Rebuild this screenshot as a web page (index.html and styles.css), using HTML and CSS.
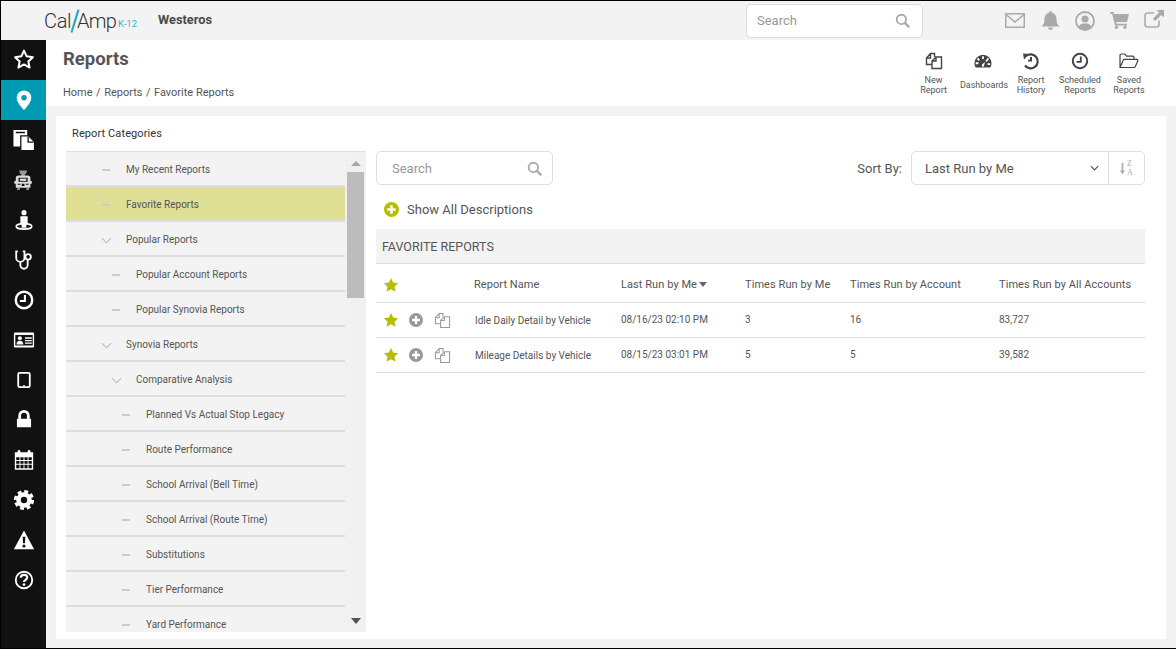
FILE: index.html
```html
<!DOCTYPE html>
<html lang="en">
<head>
<meta charset="utf-8">
<title>Reports</title>
<link rel="stylesheet" href="styles.css">
</head>
<body>
<svg class="defs" width="0" height="0" aria-hidden="true">
  <symbol id="i-search" viewBox="0 0 16 16"><circle cx="6.8" cy="6.8" r="5" fill="none" stroke="currentColor" stroke-width="2"/><path d="M10.5 10.5l4 4" stroke="currentColor" stroke-width="2.4" stroke-linecap="round"/></symbol>
  <symbol id="i-star" viewBox="0 0 24 24"><path d="M12 1.5l3.2 6.9 7.5.9-5.500 5.200 1.500 7.500-6.700-3.800-6.700 3.800 1.500-7.500L1.300 9.300l7.500-.9z" fill="currentColor"/></symbol>
  <symbol id="i-plus" viewBox="0 0 16 16"><path fill-rule="evenodd" fill="currentColor" d="M8 0a8 8 0 1 1 0 16A8 8 0 0 1 8 0zM6.700 3.500v3.200H3.500v2.600h3.200v3.200h2.600V9.300h3.200V6.700H9.300V3.500z"/></symbol>
  <symbol id="i-copy" viewBox="0 0 18 18"><path fill="none" stroke="currentColor" d="M6.500 12.500H1.500V6l4-4.500h4V5M7 16.500V9l4-4h5.500v11.500zM11 5v4H7M5.500 1.500V6H1.500"/></symbol>
</svg>
<div class="app">
  <header class="topbar">
    <div class="logo"><span class="logo-cal">Cal</span><span class="logo-slash"></span><span class="logo-amp">Amp</span><span class="logo-k">K-12</span></div>
    <div class="tenant">Westeros</div>
    <div class="top-search"><span>Search</span><svg class="s14"><use href="#i-search"/></svg></div>
    <nav class="top-icons">
      <svg viewBox="0 0 20 15" class="ti-mail"><rect x=".75" y=".75" width="18.500" height="13.500" fill="none" stroke="currentColor" stroke-width="1.500"/><path d="M1 1.500l9 7.500 9-7.500" fill="none" stroke="currentColor" stroke-width="1.500"/></svg>
      <svg viewBox="0 0 18 20" class="ti-bell"><path fill="currentColor" d="M9 0a1.600 1.600 0 0 1 1.500 1.800C13.500 2.500 15 5 15 8c0 4 1 5.500 3 7.500H0C2 13.500 3 12 3 8c0-3 1.500-5.500 4.500-6.200A1.600 1.600 0 0 1 9 0zM6.500 16.500h5a2.500 2.500 0 0 1-5 0z"/></svg>
      <svg viewBox="0 0 20 20" class="ti-user"><circle cx="10" cy="10" r="9" fill="none" stroke="currentColor" stroke-width="1.800"/><circle cx="10" cy="8" r="3.600" fill="currentColor"/><path fill="currentColor" d="M3.800 15.500C5 13 7 12.500 10 12.500s5 .5 6.200 3C14.500 17.500 12.500 18.500 10 18.500s-4.500-1-6.200-3z"/></svg>
      <svg viewBox="0 0 19 17" class="ti-cart"><path fill="currentColor" d="M0 0h3.500l.6 2H19l-2 8H6.200l.4 1.700H17v1.800H5L2.200 1.800H0z"/><circle cx="6.500" cy="15.300" r="1.700" fill="currentColor"/><circle cx="15" cy="15.300" r="1.700" fill="currentColor"/></svg>
      <svg viewBox="0 0 20 18" class="ti-ext"><path fill="none" stroke="currentColor" stroke-width="1.600" d="M15 10.500v4a2.500 2.500 0 0 1-2.500 2.500h-9A2.500 2.500 0 0 1 1 14.500v-9A2.500 2.500 0 0 1 3.500 3H10"/><path fill="currentColor" d="M12.500 0H20v7.500l-2.600-2.600-6.200 6.200-2.300-2.300 6.200-6.200z"/></svg>
    </nav>
  </header>
  <div class="body-row">
    <aside class="side">
      <a class="side-item"><svg viewBox="0 0 24 24"><path d="M12 1.800l2.900 6.200 6.800.9-5 4.700 1.400 6.700-6.100-3.400-6.100 3.400 1.400-6.700-5-4.700 6.800-.9z" fill="none" stroke="#fff" stroke-width="2.200" stroke-linejoin="round"/></svg></a>
      <a class="side-item active"><svg viewBox="0 0 24 24"><path fill="#fff" fill-rule="evenodd" d="M12 1.500a8 8 0 0 0-8 8c0 5.500 8 13.500 8 13.500s8-8 8-13.500a8 8 0 0 0-8-8zM12 6.500a3 3 0 1 1 0 6 3 3 0 0 1 0-6z"/></svg></a>
      <a class="side-item"><svg viewBox="0 0 24 24"><path fill="#fff" d="M.5 1h15v6.500H9v11.500H.5z"/><path fill="#fff" stroke="#111" stroke-width="1.400" d="M8.500 7.500h8.500l6.500 6.500v9.500H8.500z"/><path fill="#111" d="M3 3h10v1.500H3zM15.800 8.500h1.400v5h5.300v1.400h-6.700z"/></svg></a>
      <a class="side-item"><svg viewBox="0 0 24 24"><path fill="#999" d="M6.500 1.500h9l-1.500 4h-1v2h-4v-2h-1z"/><path fill="#ddd" d="M6 7h10a3 3 0 0 1 3 3v3h1.500v3H19v3.500a1 1 0 0 1-1 1H4a1 1 0 0 1-1-1V16H1.500v-3H3v-3a3 3 0 0 1 3-3z"/><path fill="#111" d="M6 9.500h10v4.500H6zM5 16h3v1.300H5zM14 16h3v1.300h-3zM9.500 16h3v2.500h-3z"/><path fill="#ddd" d="M7.500 10.500h7V13h-7z"/><path fill="#bbb" d="M4.500 21h3v1.500h-3zM14.500 21h3v1.500h-3z"/></svg></a>
      <a class="side-item"><svg viewBox="0 0 24 24"><circle cx="12" cy="4" r="2.800" fill="#fff"/><path fill="#fff" d="M8 7.800h8v7.500h-1.500V19h-5v-3.700H8z"/><ellipse cx="12" cy="19" rx="8.500" ry="3" fill="none" stroke="#fff" stroke-width="1.800"/><path fill="#fff" d="M9.500 15h5v5.500h-5z"/></svg></a>
      <a class="side-item"><svg viewBox="0 0 24 24"><path fill="none" stroke="#fff" stroke-width="2" stroke-linecap="round" d="M4.500 2.500H3.500v7a4.500 4.500 0 0 0 9 0v-7h-1M8 14v3.500a4 4 0 0 0 8 0V12"/><circle cx="16.500" cy="8.500" r="3" fill="none" stroke="#fff" stroke-width="2"/></svg></a>
      <a class="side-item"><svg viewBox="0 0 24 24"><circle cx="12" cy="12" r="9" fill="none" stroke="#fff" stroke-width="2.600"/><path fill="none" stroke="#fff" stroke-width="2.200" d="M13 6.500V13H7.500"/></svg></a>
      <a class="side-item"><svg viewBox="0 0 24 24"><rect x="1" y="3.800" width="22" height="16.400" rx="1.200" fill="#fff"/><rect x="2.500" y="6.500" width="19" height="11.500" fill="#111"/><circle cx="7.500" cy="10" r="2.200" fill="#fff"/><path fill="#fff" d="M3.800 16.800c0-3 1.500-4 3.700-4s3.700 1 3.700 4zM13 9h7.500v1.700H13zM13 12h7.500v1.400H13zM13 14.700h7.500v1.400H13z"/></svg></a>
      <a class="side-item"><svg viewBox="0 0 24 24"><rect x="5.700" y="4.200" width="12.600" height="15.600" rx="1.500" fill="none" stroke="#fff" stroke-width="2"/><path stroke="#fff" stroke-width="1.200" d="M11 18.400h2"/></svg></a>
      <a class="side-item"><svg viewBox="0 0 24 24"><path fill="#fff" fill-rule="evenodd" d="M5.800 10.500V7.200a6.200 6.200 0 0 1 12.400 0v3.300h1.500V20H4.300v-9.500zM8.800 10.500h6.400V7.200a3.200 3.200 0 0 0-6.400 0z"/></svg></a>
      <a class="side-item"><svg viewBox="0 0 24 24"><path fill="#fff" d="M2 3.500H5V2.500a1.500 1.500 0 0 1 3 0v1h8v-1a1.500 1.500 0 0 1 3 0v1h3v19H2z"/><path fill="#111" d="M3.500 9h3.600v3H3.500zM8.100 9h3.400v3H8.100zM12.500 9h3.400v3h-3.400zM16.900 9h3.600v3h-3.600zM3.500 13h3.600v3.200H3.500zM8.100 13h3.400v3.200H8.100zM12.500 13h3.400v3.200h-3.400zM16.900 13h3.600v3.200h-3.600zM3.500 17.200h3.600V21H3.500zM8.100 17.200h3.400V21H8.100zM12.500 17.200h3.400V21h-3.400zM16.900 17.200h3.600V21h-3.600z"/></svg></a>
      <a class="side-item"><svg viewBox="0 0 24 24"><circle cx="12" cy="12" r="6" fill="none" stroke="#fff" stroke-width="5"/><circle cx="12" cy="12" r="9.300" fill="none" stroke="#fff" stroke-width="3.400" stroke-dasharray="4.200 3.100"/></svg></a>
      <a class="side-item"><svg viewBox="0 0 24 24"><path fill="#fff" fill-rule="evenodd" d="M12 1.500l11 20.500H1zM10.500 8.500l.5 7h2l.5-7zM12 16.800a1.700 1.700 0 1 0 0 3.400 1.700 1.700 0 0 0 0-3.400z"/></svg></a>
      <a class="side-item"><svg viewBox="0 0 24 24"><circle cx="12" cy="12" r="9" fill="none" stroke="#fff" stroke-width="2"/><path fill="none" stroke="#fff" stroke-width="2.400" d="M8.500 9.500c0-2 1.500-3 3.500-3s3.500 1 3.500 2.800c0 2.600-3.500 2.400-3.500 5"/><circle cx="12" cy="17" r="1.500" fill="#fff"/></svg></a>
    </aside>
    <main class="main">
      <section class="page-head">
        <div class="page-title">
          <h1>Reports</h1>
          <div class="crumbs"><span>Home</span><i>/</i><span>Reports</span><i>/</i><span>Favorite Reports</span></div>
        </div>
        <div class="actions">
          <a class="action w-new"><svg class="a-ic" viewBox="0 0 18 18"><use href="#i-copy"/></svg><span>New<br>Report</span></a>
          <a class="action w-dash"><svg class="a-ic dash-ic" viewBox="0 0 20 18"><path fill="#444" fill-rule="evenodd" d="M10 2a9.500 9.500 0 0 1 9.500 9.500c0 2-.6 3.500-1.500 4.800H2C1.100 15 .5 13.500.5 11.500A9.500 9.500 0 0 1 10 2zM9 3.700v3h2v-3zM4.500 5.500L3.200 7l2 2 1.400-1.500zM15.500 5.500l-2.800 3.300 1.300 1.200 2.800-3.200zM1.900 10.500v2h3v-2zM15 11.500v2h3v-2zM9 12.800a1.800 1.800 0 0 0 1.800 2.700l1.500-5.800z"/></svg><span class="one">Dashboards</span></a>
          <a class="action w-hist"><svg class="a-ic" viewBox="0 0 18 18"><path fill="none" stroke="#444" stroke-width="2.200" d="M4.200 4A7 7 0 1 1 3 13.500"/><path fill="#444" d="M1 1.500l6 .5-5 5.500zM8 5h2v4.500H6V7.800h2z"/></svg><span>Report<br>History</span></a>
          <a class="action w-sched"><svg class="a-ic" viewBox="0 0 18 18"><circle cx="9" cy="9" r="7.200" fill="none" stroke="#444" stroke-width="2"/><path fill="none" stroke="#444" stroke-width="1.800" d="M9.800 4.500v5.300H5.500"/></svg><span>Scheduled<br>Reports</span></a>
          <a class="action w-saved"><svg class="a-ic wide" viewBox="0 0 20 16"><path fill="none" stroke="#444" stroke-width="1.200" stroke-linejoin="round" d="M1 14.500V2.300A1.300 1.300 0 0 1 2.300 1h3.200l2 2.200h6.200a1.300 1.300 0 0 1 1.300 1.300V6.500M1 14.500l3.300-7.500a1 1 0 0 1 1-.6H18a1 1 0 0 1 .9 1.400l-2.700 6c-.2.500-.6.700-1 .7z"/></svg><span>Saved<br>Reports</span></a>
        </div>
      </section>
      <section class="card">
        <div class="cats">
          <h2>Report Categories</h2>
          <div class="tree-wrap">
            <ul class="tree">
              <li class="lv0"><b class="dash"></b>My Recent Reports</li>
              <li class="lv0 sel"><b class="dash"></b>Favorite Reports</li>
              <li class="lv0"><b class="chev"></b>Popular Reports</li>
              <li class="lv1"><b class="dash"></b>Popular Account Reports</li>
              <li class="lv1"><b class="dash"></b>Popular Synovia Reports</li>
              <li class="lv0"><b class="chev"></b>Synovia Reports</li>
              <li class="lv1"><b class="chev"></b>Comparative Analysis</li>
              <li class="lv2"><b class="dash"></b>Planned Vs Actual Stop Legacy</li>
              <li class="lv2"><b class="dash"></b>Route Performance</li>
              <li class="lv2"><b class="dash"></b>School Arrival (Bell Time)</li>
              <li class="lv2"><b class="dash"></b>School Arrival (Route Time)</li>
              <li class="lv2"><b class="dash"></b>Substitutions</li>
              <li class="lv2"><b class="dash"></b>Tier Performance</li>
              <li class="lv2"><b class="dash"></b>Yard Performance</li>
            </ul>
            <div class="sbar"><span class="arr up"></span><span class="thumb"></span><span class="arr down"></span></div>
          </div>
        </div>
        <div class="content">
          <div class="tools">
            <div class="list-search"><span>Search</span><svg class="s15"><use href="#i-search"/></svg></div>
            <div class="sort">
              <label>Sort By:</label>
              <div class="select"><span>Last Run by Me</span><svg class="sel-chev" viewBox="0 0 10 6"><path d="M1 1l4 4 4-4" fill="none" stroke="#555" stroke-width="1.300"/></svg></div>
              <div class="sort-btn"><svg viewBox="0 0 6 14" class="sort-arrow"><path fill="#aaa" d="M2 0h2v9.500h2L3 14 0 9.500h2z"/></svg><span class="za">Z<br>A</span></div>
            </div>
          </div>
          <div class="show-all"><svg class="s15 lime"><use href="#i-plus"/></svg><span>Show All Descriptions</span></div>
          <div class="band">FAVORITE REPORTS</div>
          <div class="grid head">
            <span><svg class="st lime"><use href="#i-star"/></svg></span>
            <span>Report Name</span>
            <span class="sorted">Last Run by Me<b class="tri"></b></span>
            <span>Times Run by Me</span>
            <span>Times Run by Account</span>
            <span>Times Run by All Accounts</span>
          </div>
          <div class="grid row">
            <span class="ops"><svg class="st lime"><use href="#i-star"/></svg><svg class="op-plus"><use href="#i-plus"/></svg><svg class="op-copy"><use href="#i-copy"/></svg></span>
            <span class="name">Idle Daily Detail by Vehicle</span>
            <span class="val">08/16/23 02:10 PM</span>
            <span class="val">3</span>
            <span class="val">16</span>
            <span class="val">83,727</span>
          </div>
          <div class="grid row">
            <span class="ops"><svg class="st lime"><use href="#i-star"/></svg><svg class="op-plus"><use href="#i-plus"/></svg><svg class="op-copy"><use href="#i-copy"/></svg></span>
            <span class="name">Mileage Details by Vehicle</span>
            <span class="val">08/15/23 03:01 PM</span>
            <span class="val">5</span>
            <span class="val">5</span>
            <span class="val">39,582</span>
          </div>
        </div>
      </section>
    </main>
  </div>
</div>
</body>
</html>
```
FILE: styles.css
```css
* { box-sizing: border-box; }
html, body { margin: 0; height: 100%; overflow: hidden; }
body { font-family: Roboto, "Liberation Sans", sans-serif; color: #555; background: #000; }
.defs { position: absolute; }
a { display: block; }
ul { list-style: none; margin: 0; padding: 0; }
h1, h2 { margin: 0; }

.app { width: 1176px; height: 649px; padding: 1px 0 1px 1px; display: flex; flex-direction: column; }

.topbar { height: 39px; flex: none; background: #f3f3f3; display: flex; align-items: center; }
.logo { width: 157px; padding-left: 43px; display: flex; align-items: center; height: 39px; font-weight: 300; color: #333; font-size: 20px; letter-spacing: -.3px; }
.logo-cal { width: 26px; }
.logo-slash { width: 1.500px; height: 24px; background: #1ba6c6; transform: rotate(17deg); margin: 0 2px 0 3.500px; flex: none; }
.logo-amp { width: 39px; letter-spacing: -.8px; }
.logo-k { font-size: 9.500px; color: #36b4d3; letter-spacing: 0; margin: 6px 0 0 2px; font-weight: 400; }
.tenant { font-size: 12.800px; font-weight: 700; color: #4a4a4a; width: 588px; margin-top: -2px; }
.top-search { width: 177px; height: 34px; background: #fff; border: 1px solid #ddd; border-radius: 5px; display: flex; align-items: center; justify-content: space-between; padding: 0 12px 0 10px; font-size: 13px; color: #999; }
.s14 { width: 15px; height: 15px; color: #aaa; }
.s15 { width: 15px; height: 15px; color: #aaa; }
.top-icons { color: #aaa; display: flex; align-items: center; margin-left: 82px; gap: 15px; }
.ti-mail { width: 20px; height: 15px; }
.ti-bell { width: 19px; height: 20px; margin-left: 1px; }
.ti-user { width: 20px; height: 20px; }
.ti-cart { width: 19px; height: 17px; }
.ti-ext { width: 20px; height: 18px; margin-top: -4px; }

.body-row { flex: 1; display: flex; min-height: 0; }
.side { width: 45px; flex: none; background: #111; overflow: hidden; }
.side-item { height: 40px; display: flex; align-items: center; justify-content: center; }
.side-item svg { width: 22px; height: 22px; }
.side-item.active { background: #009ab3; }

.main { flex: 1; background: #f3f3f3; padding-bottom: 9px; display: flex; flex-direction: column; }
.page-head { height: 66px; flex: none; background: #fff; display: flex; justify-content: space-between; padding: 0 31px 0 17px; }
.page-title h1 { font-size: 18.500px; line-height: 24px; font-weight: 700; color: #555; margin-top: 7px; }
.crumbs { font-size: 11px; line-height: 14px; margin-top: 15px; color: #555; display: flex; }
.crumbs i { font-style: normal; margin: 0 3.500px; }
.actions { display: flex; align-items: flex-start; font-size: 9px; line-height: 10px; color: #555; text-align: center; padding-top: 12px; }
.action { display: flex; flex-direction: column; align-items: center; }
.a-ic { width: 18px; height: 18px; color: #444; margin-bottom: 5px; stroke-width: 1.400; }
.a-ic.wide { width: 20px; }
.dash-ic { transform: translateX(-1px); }
.action .one { margin-top: 5px; }
.w-new { width: 29px; }
.w-dash { width: 48px; margin-left: 12px; }
.w-hist { width: 30px; margin-left: 8px; }
.w-sched { width: 42px; margin-left: 13px; }
.w-saved { width: 32px; margin-left: 12px; }

.card { flex: 1; min-height: 0; margin: 10px 10px 0 10px; background: #fff; display: flex; overflow: hidden; padding: 0 21px 0 10px; }
.cats { width: 300px; flex: none; display: flex; flex-direction: column; padding-bottom: 7px; }
.cats h2 { font-size: 11px; line-height: 14px; font-weight: 400; color: #333; padding: 11px 0 10px 6px; letter-spacing: .1px; }
.tree-wrap { flex: 1; min-height: 0; display: flex; border-top: 1px solid #ddd; overflow: hidden; }
.tree { width: 279px; flex: none; background: #f3f3f3; overflow: hidden; }
.tree li { height: 35px; border-bottom: 2px solid #ddd; display: flex; align-items: center; font-size: 10px; color: #555; padding-top: 2px; white-space: nowrap; }
.tree li.sel { background: #dfdf96; }
.lv0 { padding-left: 36px; }
.lv1 { padding-left: 46px; }
.lv2 { padding-left: 56px; }
.dash, .chev { width: 24px; flex: none; display: block; position: relative; height: 10px; }
.dash::before { content: ""; position: absolute; left: 0; top: 4px; width: 8px; height: 2px; background: #ccc; }
.chev::before { content: ""; position: absolute; left: 1px; top: 0; width: 6px; height: 6px; border-right: 1.500px solid #bbb; border-bottom: 1.500px solid #bbb; transform: rotate(45deg); }
.sbar { width: 21px; flex: none; background: #f1f1f1; display: flex; flex-direction: column; align-items: center; position: relative; }
.thumb { width: 17px; height: 126px; background: #bcbcbc; }
.arr { width: 0; height: 0; border-left: 5px solid transparent; border-right: 5px solid transparent; }
.arr.up { border-bottom: 5px solid #a5a5a5; margin: 9px 0 6px; }
.arr.down { border-top: 6px solid #505050; position: absolute; bottom: 8px; }

.content { flex: 1; margin-left: 10px; min-width: 0; padding-top: 35px; }
.tools { display: flex; justify-content: space-between; height: 34px; }
.list-search { width: 177px; height: 34px; border: 1px solid #ddd; border-radius: 5px; display: flex; align-items: center; justify-content: space-between; padding: 0 10px 0 15px; font-size: 13px; color: #999; }
.sort { display: flex; align-items: center; }
.sort label { font-size: 13px; color: #555; margin-right: 9px; }
.select { width: 198px; height: 34px; border: 1px solid #ddd; border-radius: 5px 0 0 5px; display: flex; align-items: center; justify-content: space-between; padding: 0 9px 0 13px; font-size: 13px; color: #555; }
.sel-chev { width: 9px; height: 6px; }
.sort-btn { width: 36px; height: 34px; border: 1px solid #ddd; border-left: 0; border-radius: 0 5px 5px 0; display: flex; align-items: center; justify-content: center; gap: 2px; }
.sort-arrow { width: 5px; height: 13px; }
.za { font: 8px/9px "Liberation Serif", serif; color: #aaa; }

.show-all { display: flex; align-items: center; gap: 8px; height: 44px; padding-left: 8px; font-size: 13px; color: #555; padding-top: 4px; }
.show-all .s15 { width: 15px; height: 15px; }
.lime { color: #b5bd00; }
.show-all svg.lime { color: #b5bd00; }
.band { height: 35px; background: #f3f3f3; border-bottom: 1px solid #ddd; font-size: 12.500px; line-height: 34px; padding: 1px 0 0 6px; color: #555; }
.grid { display: grid; grid-template-columns: 98px 147px 124px 105px 149px 1fr; align-items: center; border-bottom: 1px solid #ddd; font-size: 10px; color: #555; white-space: nowrap; }
.head { height: 39px; font-size: 11px; padding-top: 3px; letter-spacing: .07px; }
.head > span:first-child { padding-left: 7px; display: flex; }
.row { height: 35px; }
.val { padding-bottom: 1px; }
.st { width: 16px; height: 16px; }
.ops { display: flex; align-items: center; padding-left: 7px; }
.op-plus { width: 14px; height: 14px; color: #999; margin-left: 10px; }
.op-copy { width: 17px; height: 17px; color: #999; margin-left: 11px; stroke-width: 1.100; }
.name { padding-left: 1px; }
.sorted { display: flex; align-items: center; }
.tri { width: 0; height: 0; border-left: 4.500px solid transparent; border-right: 4.500px solid transparent; border-top: 5px solid #666; margin-left: 2px; margin-top: -1px; }
```
